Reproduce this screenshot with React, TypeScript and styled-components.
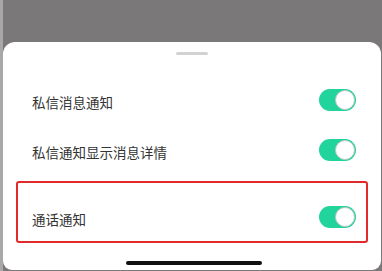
import React from "react";
import styled, { createGlobalStyle } from "styled-components";

const Global = createGlobalStyle`
  html, body { margin: 0; padding: 0; background: #7a7879; }
  body { width: 382px; height: 271px; overflow: hidden; font-family: "Noto Sans CJK SC", "Noto Sans", sans-serif; }
`;

const Screen = styled.div`
  width: 382px;
  height: 271px;
  box-sizing: border-box;
  display: flex;
  flex-direction: column;
  background: #7a7879;
  border-left: 3px solid #a9a8a9;
`;

const Sheet = styled.div`
  margin-top: 42px;
  height: 228px;
  width: 378px;
  background: #ffffff;
  border-radius: 12px 12px 9px 9px;
  display: flex;
  flex-direction: column;
  align-items: stretch;
  padding: 10px 13px 0 13px;
  box-sizing: border-box;
`;

const Handle = styled.div`
  align-self: center;
  width: 32px;
  height: 3px;
  border-radius: 2px;
  background: #d2d2d2;
  margin-bottom: 20px;
`;

const Row = styled.div<{ $h: number }>`
  height: ${(p) => p.$h}px;
  display: flex;
  align-items: center;
  justify-content: space-between;
  padding: 0 12px 0 16px;
`;

const Label = styled.span`
  font-size: 13.5px;
  color: #333333;
  padding-top: 4px;
  letter-spacing: 0;
`;

const Highlight = styled.div`
  margin-top: 6px;
  border: 2px solid #e4292a;
  border-radius: 3px;
  padding-top: 10px;
  & > div {
    padding: 0 10px 0 14px;
  }
`;

const Track = styled.div`
  width: 37px;
  height: 22px;
  border-radius: 11px;
  background: #20d49b;
  display: flex;
  align-items: center;
  justify-content: flex-end;
  padding-right: 1px;
  box-sizing: border-box;
`;

const Knob = styled.div`
  width: 20px;
  height: 20px;
  border-radius: 50%;
  background: #ffffff;
  box-sizing: border-box;
  border: 1px solid #bfc8c4;
`;

const HomeBar = styled.div`
  align-self: center;
  margin-top: 18px;
  margin-left: 4px;
  width: 136px;
  height: 4px;
  border-radius: 2px;
  background: #111111;
`;

const Toggle = () => (
  <Track>
    <Knob />
  </Track>
);

export default function App() {
  return (
    <>
      <Global />
      <Screen>
        <Sheet>
          <Handle />
          <Row $h={50}>
            <Label>私信消息通知</Label>
            <Toggle />
          </Row>
          <Row $h={50}>
            <Label>私信通知显示消息详情</Label>
            <Toggle />
          </Row>
          <Highlight>
            <Row $h={48}>
              <Label>通话通知</Label>
              <Toggle />
            </Row>
          </Highlight>
          <HomeBar />
        </Sheet>
      </Screen>
    </>
  );
}
